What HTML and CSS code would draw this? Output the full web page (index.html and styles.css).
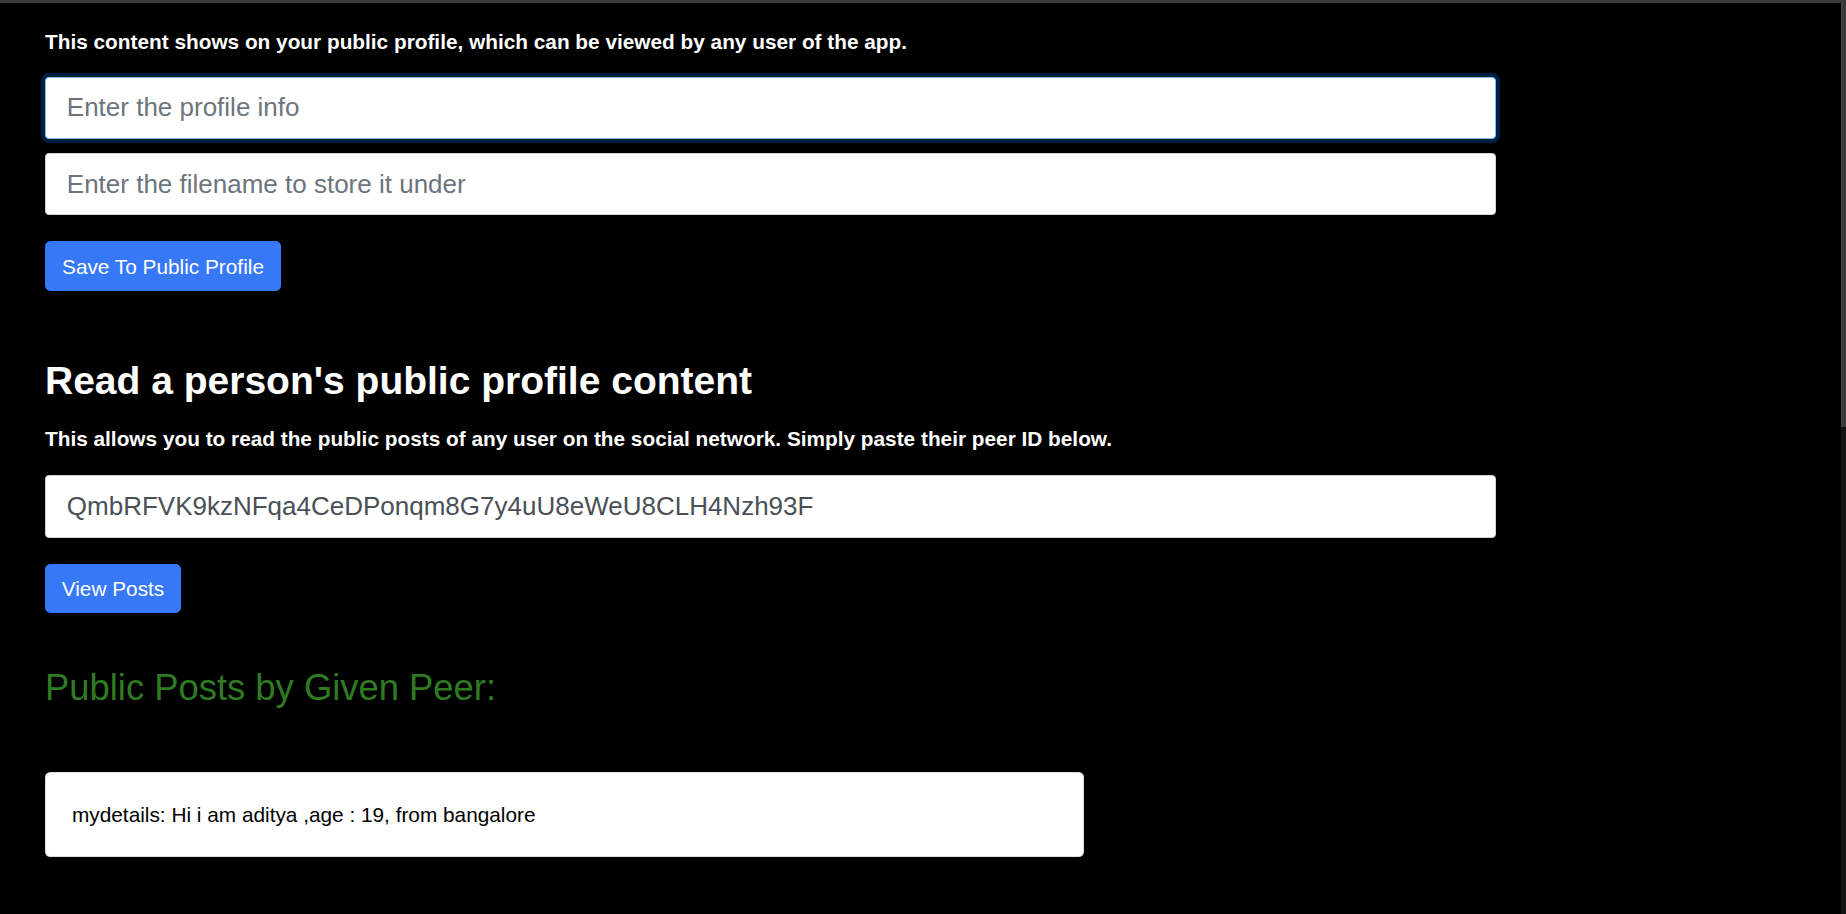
FILE: index.html
```html
<!DOCTYPE html>
<html lang="en">
<head>
<meta charset="utf-8">
<title>Public profile</title>
<link rel="stylesheet" href="styles.css">
</head>
<body>
<div class="topline"></div>
<main class="page">
  <p class="note note-first">This content shows on your public profile, which can be viewed by any user of the app.</p>
  <input class="field field-focus" type="text" placeholder="Enter the profile info">
  <input class="field field-second" type="text" placeholder="Enter the filename to store it under">
  <button class="btn btn-save">Save To Public Profile</button>

  <h2 class="title">Read a person's public profile content</h2>
  <p class="note note-second">This allows you to read the public posts of any user on the social network. Simply paste their peer ID below.</p>
  <input class="field field-peer" type="text" value="QmbRFVK9kzNFqa4CeDPonqm8G7y4uU8eWeU8CLH4Nzh93F">
  <button class="btn btn-view">View Posts</button>

  <h3 class="posts-title">Public Posts by Given Peer:</h3>
  <div class="card">
    <div class="card-body">mydetails: Hi i am aditya ,age : 19, from bangalore</div>
  </div>
</main>
<div class="scrollbar"><div class="scrollbar-thumb"></div></div>
</body>
</html>
```
FILE: styles.css
```css
* { box-sizing: border-box; }

html, body {
  margin: 0;
  padding: 0;
  background: #000;
  height: 914px;
  overflow: hidden;
}

body {
  font-family: "Liberation Sans", Arial, sans-serif;
  color: #fff;
}

.topline {
  height: 3px;
  background: #3a3a3a;
}

.page {
  display: flex;
  flex-direction: column;
  align-items: flex-start;
  padding-left: 45px;
  width: 1496px;
}

.note {
  margin: 0;
  font-weight: 700;
  font-size: 20.8px;
  line-height: 31.2px;
  color: #fff;
}

.note-first { margin-top: 22.5px; }
.note-second { margin-top: 18.3px; }

.field {
  display: block;
  width: 1451px;
  height: 62.4px;
  padding: 0 20.8px;
  font-family: "Liberation Sans", Arial, sans-serif;
  font-size: 26px;
  color: #495057;
  background: #fff;
  border: 1.3px solid #ced4da;
  border-radius: 3.9px;
  outline: none;
}

.field::placeholder { color: #6c757d; opacity: 1; }

.field-focus {
  margin-top: 20px;
  border-color: #80bdff;
  box-shadow: 0 0 0 4.2px rgba(0, 123, 255, 0.25);
}

.field-second { margin-top: 14px; }
.field-peer { margin-top: 20.6px; }

.btn {
  display: inline-block;
  margin-top: 26px;
  height: 49.4px;
  padding: 0 15.6px;
  font-family: "Liberation Sans", Arial, sans-serif;
  font-size: 20.8px;
  line-height: 31.2px;
  color: #fff;
  background: #3778f7;
  border: 1.3px solid #3778f7;
  border-radius: 5.2px;
}

.btn-save { width: 236px; }
.btn-view { width: 136px; }

.title {
  margin: 67.5px 0 0;
  font-size: 39px;
  font-weight: 700;
  line-height: 46.8px;
  color: #fff;
}

.posts-title {
  margin: 52.5px 0 0;
  font-size: 36.4px;
  font-weight: 400;
  line-height: 43.7px;
  color: #2f7b22;
}

.card {
  margin-top: 62.5px;
  width: 1039px;
  background: #fff;
  border: 1.3px solid rgba(0, 0, 0, 0.125);
  border-radius: 5.2px;
}

.card-body {
  padding: 26px;
  font-size: 20.8px;
  line-height: 31.2px;
  color: #000;
}

.scrollbar {
  position: fixed;
  top: 3px;
  right: 0;
  width: 5px;
  height: 911px;
  background: #141414;
}

.scrollbar-thumb {
  height: 424px;
  background: #3a3a3a;
  border-left: 1px solid #4a4a4a;
}
```
